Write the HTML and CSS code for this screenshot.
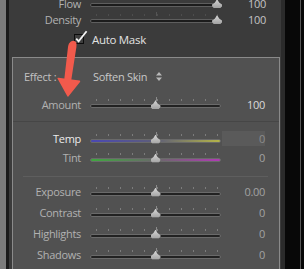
FILE: index.html
```html
<!DOCTYPE html>
<html>
    <head>
        <title>Spot Brush</title>
        <meta charset="utf-8">
        <link rel="stylesheet" href="styles.css">
    </head>
    <body>
        <div class="app">
            <div class="edge-gray"></div>
            <div class="edge-black"></div>
            <div class="column">
                <div class="brush">
                    <div class="row top">
                        <span class="label">Flow</span>
                        <div class="slider faint"><div class="ticks"></div><div class="track"></div><div class="thumb" style="left:97%"></div></div>
                        <span class="value">100</span>
                    </div>
                    <div class="row top">
                        <span class="label">Density</span>
                        <div class="slider faint"><div class="ticks"></div><div class="track"></div><div class="thumb" style="left:97%"></div></div>
                        <span class="value">100</span>
                    </div>
                    <div class="automask">
                        <svg class="check" width="14" height="14" viewBox="0 0 14 14">
                            <rect x="0.5" y="4.5" width="9" height="9" fill="#3e3e3e" stroke="#0c0c0c"/>
                            <path d="M2.2 8.6 L4.6 11.4 L12.6 1.2" fill="none" stroke="#f4f4f4" stroke-width="1.8"/>
                        </svg>
                        <span class="automask-text">Auto Mask</span>
                    </div>
                </div>
                <div class="panel">
                    <div class="effect">
                        <span class="effect-label">Effect :</span>
                        <span class="effect-name">Soften Skin</span>
                        <svg class="updown" width="6" height="9" viewBox="0 0 6 9">
                            <path d="M0 3.5 L3 0 L6 3.5 Z M0 5.5 L3 9 L6 5.5 Z" fill="#b9b9b9"/>
                        </svg>
                    </div>
                    <div class="row">
                        <span class="label">Amount</span>
                        <div class="slider"><div class="ticks"></div><div class="track"></div><div class="thumb" style="left:50%"></div></div>
                        <span class="value bright">100</span>
                    </div>
                    <div class="sep"></div>
                    <div class="row short">
                        <span class="label white">Temp</span>
                        <div class="slider"><div class="ticks"></div><div class="track temp"></div><div class="thumb" style="left:50%"></div></div>
                        <span class="value"><span class="box">0</span></span>
                    </div>
                    <div class="row short">
                        <span class="label">Tint</span>
                        <div class="slider"><div class="ticks"></div><div class="track tint"></div><div class="thumb" style="left:50%"></div></div>
                        <span class="value dim">0</span>
                    </div>
                    <div class="sep inset"></div>
                    <div class="row tone">
                        <span class="label">Exposure</span>
                        <div class="slider"><div class="ticks"></div><div class="track"></div><div class="thumb" style="left:50%"></div></div>
                        <span class="value dim">0.00</span>
                    </div>
                    <div class="row tone">
                        <span class="label">Contrast</span>
                        <div class="slider"><div class="ticks"></div><div class="track"></div><div class="thumb" style="left:50%"></div></div>
                        <span class="value dim">0</span>
                    </div>
                    <div class="row tone">
                        <span class="label">Highlights</span>
                        <div class="slider"><div class="ticks"></div><div class="track"></div><div class="thumb" style="left:50%"></div></div>
                        <span class="value dim">0</span>
                    </div>
                    <div class="row tone">
                        <span class="label">Shadows</span>
                        <div class="slider"><div class="ticks"></div><div class="track"></div><div class="thumb" style="left:50%"></div></div>
                        <span class="value dim">0</span>
                    </div>
                    <div class="row tone">
                        <span class="label">Whites</span>
                        <div class="slider"><div class="ticks"></div><div class="track"></div><div class="thumb" style="left:50%"></div></div>
                        <span class="value dim">0</span>
                    </div>
                </div>
            </div>
            <div class="edge-band"></div>
            <div class="edge-dark"></div>
            <div class="edge-line"></div>
            <div class="edge-end"></div>
        </div>
        <svg class="arrow" width="304" height="269" viewBox="0 0 304 269">
            <path d="M69 43.5 Q72 39 76 42 Q77 44 76.4 47 L71.2 80.5 L64.2 80 L68 47 Q68.2 45 69 43.5 Z" fill="#f25a4c"/>
            <path d="M57.5 78.6 Q57 77.6 58.4 77.8 L79.6 80.6 Q80.8 81 80 82 L68.4 96.4 Q67.8 97 67.3 96.2 Z" fill="#f25a4c"/>
        </svg>
    </body>
</html>
```

FILE: styles.css
```css
body{
    margin: 0;
    background-color: #060606;
    font-family: "Open Sans", "Noto Sans", sans-serif;
    font-size: 11px;
    letter-spacing: -0.3px;
    overflow: hidden;
}
.app{
    display: flex;
    height: 269px;
    overflow: hidden;
}
.edge-gray{
    width: 6px;
    background-color: #7b7b7b;
}
.edge-black{
    width: 3px;
    background-color: #1a1a1a;
}
.column{
    width: 268px;
    padding: 0 1px 0 3px;
    background-color: #3b3b3b;
}
.edge-band{
    width: 4px;
    background-color: #2b2b2b;
}
.edge-dark{
    width: 15px;
    background-color: #080808;
}
.edge-line{
    width: 1px;
    background-color: #565656;
}
.edge-end{
    flex: 1;
    background-color: #060606;
}

/* brush rows */
.brush{
    margin-top: -5px;
    padding-left: 1px;
}
.row{
    display: grid;
    grid-template-columns: 77px 132px 1fr;
    align-items: center;
    height: 20px;
}
.row.top{
    height: 16px;
}
.row.short{
    height: 19px;
}
.row.tone{
    height: 21px;
}
.label{
    padding-right: 9px;
    text-align: right;
    color: #b2b2b2;
    white-space: nowrap;
}
.label.white{
    color: #ececec;
}
.value{
    padding-right: 14px;
    text-align: right;
    color: #c4c4c4;
}
.value.bright{
    color: #dadada;
}
.value.dim{
    color: #a2a2a2;
}
.box{
    display: block;
    height: 15px;
    line-height: 15px;
    background-color: #5a5a5a;
    color: #8c8c8c;
}

/* sliders */
.slider{
    position: relative;
    width: 131px;
    height: 14px;
}
.ticks{
    position: relative;
    margin-left: 6px;
    width: 122px;
    height: 2px;
    margin-top: 2px;
    background: repeating-linear-gradient(90deg, #7c7c7c 0 1px, transparent 1px 12.1px);
}
.ticks::after{
    content: "";
    position: absolute;
    left: 60px;
    top: -2px;
    width: 1px;
    height: 4px;
    background-color: #8a8a8a;
}
.faint .ticks{
    background: repeating-linear-gradient(90deg, #4d4d4d 0 1px, transparent 1px 12.1px);
}
.faint .ticks::after{
    background-color: #555555;
}
.track{
    margin-top: 3px;
    height: 2px;
    border: 1px solid #6a6a6a;
    border-radius: 3px;
    background-color: #222222;
}
.faint .track{
    border-color: #5e5e5e;
    background-color: #1c1c1c;
}
.track.temp{
    background: linear-gradient(90deg, #4a48b4, #5e5e78 50%, #b4b448);
}
.track.tint{
    background: linear-gradient(90deg, #3ea83e, #6a6a6a 50%, #b03ab4);
}
.thumb{
    position: absolute;
    top: 3px;
    width: 10px;
    height: 9px;
    margin-left: -5px;
    filter: drop-shadow(0 0 0.6px #111111);
}
.thumb::before{
    content: "";
    position: absolute;
    inset: 0;
    background: linear-gradient(#d6d6d6, #a2a2a2);
    clip-path: polygon(50% 0, 72% 40%, 100% 62%, 100% 84%, 84% 100%, 16% 100%, 0 84%, 0 62%, 28% 40%);
}

/* auto mask */
.automask{
    display: flex;
    align-items: center;
    height: 18px;
    margin: 3px 0 9px;
    padding-left: 61px;
}
.check{
    margin-top: -4px;
}
.automask-text{
    margin-left: 4px;
    color: #e2e2e2;
    font-size: 11.5px;
}

/* effect panel */
.panel{
    min-height: 300px;
    padding-top: 8px;
    background-color: #515151;
    border: solid #8a8a8a 1px;
    border-bottom: none;
}
.effect{
    display: flex;
    align-items: center;
    height: 20px;
    margin-bottom: 8px;
    padding-left: 11px;
    color: #c2c2c2;
}
.effect-label{
    width: 69px;
}
.effect-name{
    color: #c8c8c8;
}
.updown{
    margin-left: 9px;
}
.sep{
    height: 1px;
    margin: 7px 0;
    background-color: #464646;
}
.sep.inset{
    margin: 9px 11px 4px 10px;
    background-color: #5e5e5e;
}
.arrow{
    position: absolute;
    top: 0;
    left: 0;
    pointer-events: none;
}
```
